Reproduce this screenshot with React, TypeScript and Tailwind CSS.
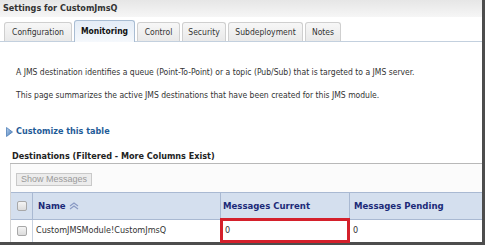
import React from "react";

const tabs = [
  { label: "Configuration", w: "w-[68px]" },
  { label: "Monitoring", w: "w-[61px]", active: true },
  { label: "Control", w: "w-[43px]" },
  { label: "Security", w: "w-[44px]" },
  { label: "Subdeployment", w: "w-[75px]" },
  { label: "Notes", w: "w-[36px]" },
];

function Checkbox() {
  return (
    <div className="w-[10px] h-[10px] mx-auto rounded-[2px] border border-[#a8a8a8] bg-gradient-to-b from-[#f4f4f4] to-[#dcdcdc]" />
  );
}

function SortIcon() {
  return (
    <svg width="10" height="8" viewBox="0 0 10 8" className="ml-[3px]">
      <path d="M1 4 L5 1 L9 4" fill="none" stroke="#8a9ac4" strokeWidth="1.2" />
      <path d="M1 7 L5 4 L9 7" fill="none" stroke="#8a9ac4" strokeWidth="1.2" />
    </svg>
  );
}

export default function App() {
  return (
    <div className="w-[486px] h-[245px] bg-white font-['DejaVu_Sans_Condensed','DejaVu_Sans',sans-serif] text-[8.5px] text-[#333]">
      <div className="w-[485px] h-[245px] border-r-[3px] border-b-[3px] border-[#4d4d4d] flex flex-col">
        <div className="h-[17px] px-[3px] flex items-center bg-gradient-to-b from-[#e6e6e6] to-[#f6f6f6] font-bold text-[9px] text-[#333]">
          Settings for CustomJmsQ
        </div>

        <div className="h-[25px] flex items-end gap-[2px] pl-[4px] border-b border-[#c3d0de]">
          {tabs.map(t =>
            t.active ? (
              <div
                key={t.label}
                className={`${t.w} h-[22px] -mb-px flex items-center justify-center rounded-t-[3px] border border-b-0 border-[#a9bdd3] bg-gradient-to-b from-[#e4edf7] to-[#f5f8fc] font-bold text-[#111]`}
              >
                {t.label}
              </div>
            ) : (
              <div
                key={t.label}
                className={`${t.w} h-[19px] flex items-center justify-center rounded-t-[3px] border border-b-0 border-[#cfcfcf] bg-gradient-to-b from-[#f7f7f7] to-[#e9e9e9]`}
              >
                {t.label}
              </div>
            )
          )}
        </div>

        <div className="flex-1 flex flex-col">
          <p className="mt-[24px] pl-[16px] leading-[12px]">
            A JMS destination identifies a queue (Point-To-Point) or a topic (Pub/Sub) that is targeted to a JMS server.
          </p>
          <p className="mt-[11px] pl-[16px] leading-[12px]">
            This page summarizes the active JMS destinations that have been created for this JMS module.
          </p>

          <div className="mt-[25px] pl-[6px] h-[12px] flex items-center gap-[3px] font-bold text-[9px] text-[#1f5c98]">
            <svg width="7" height="10" viewBox="0 0 7 10">
              <defs>
                <linearGradient id="tri" x1="0" y1="0" x2="1" y2="1">
                  <stop offset="0" stopColor="#bcd4ef" />
                  <stop offset="1" stopColor="#3d73b3" />
                </linearGradient>
              </defs>
              <path d="M0.5 0.5 L6.5 5 L0.5 9.5 Z" fill="url(#tri)" stroke="#4f7fb8" strokeWidth="0.8" />
            </svg>
            Customize this table
          </div>

          <div className="mt-[13px] ml-[10px] h-[13px] pl-[2px] flex items-center border-b border-[#b8b8b8] font-bold text-[9px] text-[#222]">
            Destinations (Filtered - More Columns Exist)
          </div>

          <div className="flex-1 ml-[10px] border-l border-[#d4d4d4] bg-[#fbfbfb] flex flex-col">
            <div className="mt-[9px] ml-[5px] w-[76px] h-[13px] flex items-center justify-center border border-[#c9c9c9] bg-[#ececec] text-[#9a9a9a] font-['Liberation_Sans',sans-serif] text-[9px]">
              Show Messages
            </div>

            <div className="mt-[6px] flex-1 flex flex-col bg-white">
              <div className="h-[28px] flex bg-[#d4dfee] border-y border-[#a9b9d2] font-bold text-[9.5px] text-[#1b2a78]">
                <div className="w-[22px] flex items-center border-r border-[#a9b9d2]">
                  <Checkbox />
                </div>
                <div className="w-[188px] pl-[5px] flex items-center border-r border-[#a9b9d2]">
                  Name
                  <SortIcon />
                </div>
                <div className="w-[129px] pl-[2px] flex items-center border-r border-[#a9b9d2]">
                  Messages Current
                </div>
                <div className="flex-1 pl-[4px] flex items-center">Messages Pending</div>
              </div>
              <div className="flex-1 flex text-[9px]">
                <div className="w-[22px] flex items-center border-r border-[#c8d2e0]">
                  <Checkbox />
                </div>
                <div className="w-[188px] pl-[3px] flex items-center border-r border-[#c8d2e0]">
                  CustomJMSModule!CustomJmsQ
                </div>
                <div className="w-[129px] relative pl-[4px] flex items-center border-r border-[#c8d2e0]">
                  0
                  <div className="absolute -left-px -top-[2px] -right-px -bottom-[1px] border-[3px] border-[#d4202b]" />
                </div>
                <div className="flex-1 pl-[3px] flex items-center">0</div>
              </div>
            </div>
          </div>
        </div>
      </div>
    </div>
  );
}
